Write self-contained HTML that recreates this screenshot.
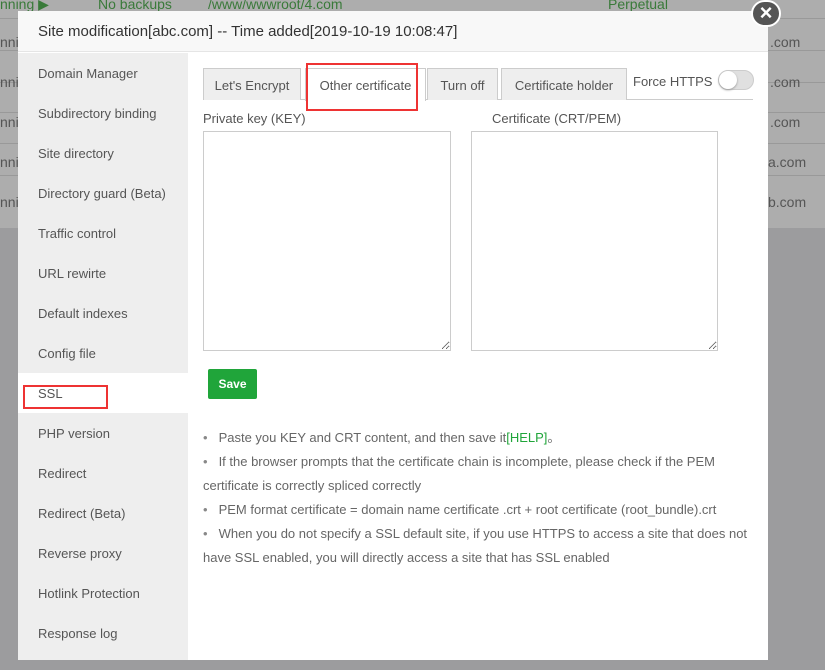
<!DOCTYPE html>
<html><head><style>
*{margin:0;padding:0;box-sizing:border-box}
body{width:825px;height:670px;overflow:hidden;position:relative;font-family:"Liberation Sans",sans-serif;background:#9c9c9e;color:#555;font-size:13px}
.bgtop{position:absolute;left:0;top:0;width:825px;height:228px;background:#adadad}
.row{position:absolute;left:0;width:825px;border-top:1px solid #999;height:1px}
.bgt{position:absolute;font-size:14px;color:#555}
.modal{position:absolute;left:18px;top:11px;width:750px;height:649px;background:#fff}
.hdr{height:41px;background:#f8f8f8;border-bottom:1px solid #e5e5e5;font-size:15px;color:#333;padding:12px 0 0 20px}
.side{position:absolute;left:0;top:42px;width:170px;height:607px;background:#eeeeee}
.side div{height:40px;line-height:42px;padding-left:20px;font-size:13px;color:#555}
.side .on{background:#fff}
.tabs{position:absolute;left:185px;top:57px;width:550px;height:32px;border-bottom:1px solid #ccc}
.tab{position:absolute;top:0;height:32px;line-height:34px;text-align:center;background:#eee;border:1px solid #ccc;border-bottom:none;font-size:13px;color:#555}
.red{position:absolute;border:2px solid #e33;}
textarea{position:absolute;border:1px solid #ccc;background:#fff;resize:both}
ul{position:absolute;left:185px;top:415px;width:550px;list-style:none;font-size:13px;line-height:24px;color:#666}
ul li:before{content:"•";margin:0 11px 0 0;color:#888}
</style></head><body>
<div class="bgtop"></div>
<div class="row" style="top:18px"></div><div class="row" style="top:50px"></div><div class="row" style="top:82px"></div><div class="row" style="top:112px"></div><div class="row" style="top:143px"></div><div class="row" style="top:175px"></div>
<div class="bgt" style="left:0;top:-4px;color:#3a7a3a">nning ▶</div>
<div class="bgt" style="left:98px;top:-4px;color:#3a7a3a">No backups</div>
<div class="bgt" style="left:208px;top:-4px;color:#3a7a3a">/www/wwwroot/4.com</div>
<div class="bgt" style="left:608px;top:-4px;color:#3a7a3a">Perpetual</div>
<div class="bgt" style="left:0;top:34px">nni</div><div class="bgt" style="left:0;top:74px">nni</div><div class="bgt" style="left:0;top:114px">nni</div><div class="bgt" style="left:0;top:154px">nni</div><div class="bgt" style="left:0;top:194px">nni</div>
<div class="bgt" style="left:770px;top:34px">.com</div><div class="bgt" style="left:770px;top:74px">.com</div><div class="bgt" style="left:770px;top:114px">.com</div><div class="bgt" style="left:768px;top:154px">a.com</div><div class="bgt" style="left:768px;top:194px">b.com</div>
<div class="modal">
<div class="hdr">Site modification[abc.com] -- Time added[2019-10-19 10:08:47]</div>
<div class="side">
<div>Domain Manager</div><div>Subdirectory binding</div><div>Site directory</div><div>Directory guard (Beta)</div><div>Traffic control</div><div>URL rewirte</div><div>Default indexes</div><div>Config file</div><div class="on">SSL</div><div>PHP version</div><div>Redirect</div><div>Redirect (Beta)</div><div>Reverse proxy</div><div>Hotlink Protection</div><div>Response log</div>
</div>
<div class="red" style="left:5px;top:374px;width:85px;height:24px"></div>
<div class="tabs">
<div class="tab" style="left:0;width:98px">Let's Encrypt</div>
<div class="tab" style="left:102px;width:121px;background:#fff;height:33px">Other certificate</div>
<div class="tab" style="left:224px;width:71px">Turn off</div>
<div class="tab" style="left:298px;width:126px">Certificate holder</div>
<div style="position:absolute;left:430px;top:6px;font-size:13px;color:#555">Force HTTPS</div>
<div style="position:absolute;left:515px;top:2px;width:36px;height:20px;border-radius:10px;background:#e0e0e0;border:1px solid #ccc"><div style="width:18px;height:18px;border-radius:9px;background:#fff;box-shadow:0 1px 2px #999"></div></div>
</div>
<div class="red" style="left:288px;top:52px;width:112px;height:48px"></div>
<div style="position:absolute;left:185px;top:100px">Private key (KEY)</div>
<div style="position:absolute;left:474px;top:100px">Certificate (CRT/PEM)</div>
<textarea style="left:185px;top:120px;width:248px;height:220px"></textarea>
<textarea style="left:453px;top:120px;width:247px;height:220px"></textarea>
<div style="position:absolute;left:190px;top:358px;width:49px;height:30px;background:#20a53a;border-radius:2px;color:#fff;font-weight:bold;font-size:12px;text-align:center;line-height:30px">Save</div>
<ul>
<li>Paste you KEY and CRT content, and then save it<span style="color:#20a53a">[HELP]</span>。</li>
<li>If the browser prompts that the certificate chain is incomplete, please check if the PEM certificate is correctly spliced correctly</li>
<li>PEM format certificate = domain name certificate .crt + root certificate (root_bundle).crt</li>
<li>When you do not specify a SSL default site, if you use HTTPS to access a site that does not have SSL enabled, you will directly access a site that has SSL enabled</li>
</ul>
</div>
<div style="position:absolute;left:751px;top:0px;width:30px;height:27px;border-radius:15px;background:#555;border:2px solid #fff;color:#fff;text-align:center;line-height:22px;font-size:22px;font-weight:bold">×</div>
</body></html>
